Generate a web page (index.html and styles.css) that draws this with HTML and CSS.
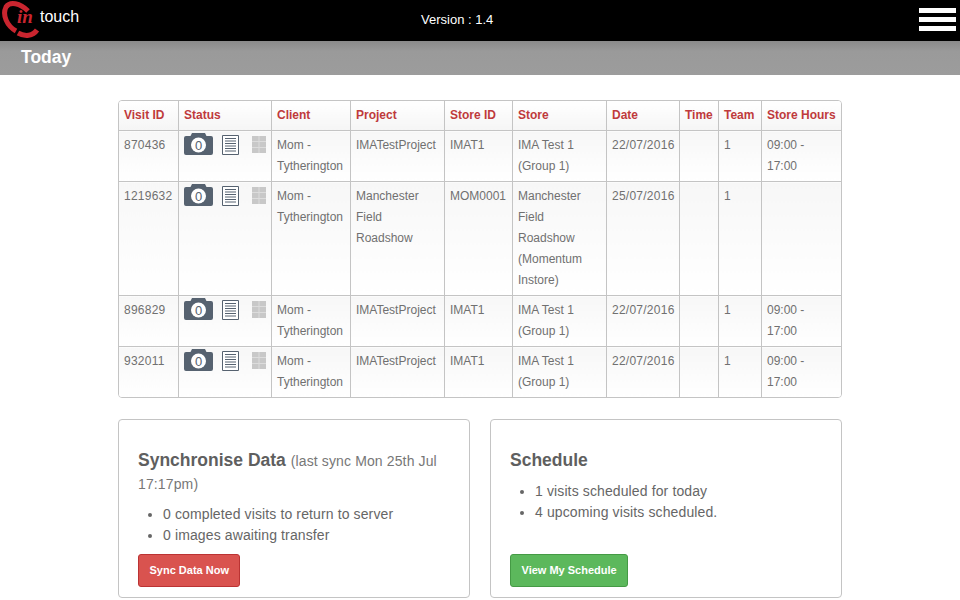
FILE: index.html
```html
<!DOCTYPE html>
<html>
<head>
<meta charset="utf-8">
<title>InTouch</title>
<link rel="stylesheet" href="styles.css">
</head>
<body>
  <svg class="icon-defs" width="0" height="0">
    <symbol id="icon-camera" viewBox="0 0 29 22">
      <path d="M0 5q0-2 2-2h4.500l1.500-3h13l1.500 3h4.500q2 0 2 2v15q0 2-2 2h-25q-2 0-2-2z" fill="#566270"/>
      <circle cx="14.500" cy="12" r="7.500" fill="#fff"/>
    </symbol>
    <symbol id="icon-list" viewBox="0 0 17 20">
      <path d="M.5.5h16v19H.5z" fill="#fff" stroke="#566270"/>
      <path d="M3 3.500h11M3 6h11M3 8.500h11M3 11h11M3 13.500h11M3 16h11" stroke="#566270"/>
    </symbol>
    <symbol id="icon-grid" viewBox="0 0 14 17">
      <path d="M0 0h14v17H0z" fill="#c8c8c8"/>
      <path d="M0 5.500h14M0 11.500h14M7 0v17" stroke="#dcdcdc"/>
    </symbol>
  </svg>

  <div class="topbar">
    <div class="logo">
      <svg width="42" height="40" viewBox="0 0 42 40">
        <path d="M16 31C7 26 2 15 6 7C10 1 20 3 28 11" fill="none" stroke="#c9252f" stroke-width="5"/>
        <path d="M18 33C25 37 33 36 37 30" fill="none" stroke="#c9252f" stroke-width="5"/>
        <text x="25" y="23" class="logo-in">in</text>
      </svg>
      <span class="logo-text">touch</span>
    </div>
    <div class="version">Version : 1.4</div>
    <div class="burger"><span></span><span></span><span></span></div>
  </div>
  <div class="titlebar">Today</div>

  <div class="content">
    <div class="table-wrap">
      <table class="visits">
        <colgroup>
          <col class="c1"><col class="c2"><col class="c3"><col class="c4"><col class="c5">
          <col class="c6"><col class="c7"><col class="c8"><col class="c9"><col class="c10">
        </colgroup>
        <thead>
          <tr>
            <th>Visit ID</th><th>Status</th><th>Client</th><th>Project</th><th>Store ID</th>
            <th>Store</th><th>Date</th><th>Time</th><th>Team</th><th>Store Hours</th>
          </tr>
        </thead>
        <tbody>
          <tr>
            <td class="num">870436</td>
            <td>
              <div class="status">
                <svg class="cam" width="29" height="22"><use href="#icon-camera"/><text x="14.500" y="16.500" class="cam-count">0</text></svg>
                <svg class="list" width="17" height="20"><use href="#icon-list"/></svg>
                <svg class="grid" width="14" height="17"><use href="#icon-grid"/></svg>
              </div>
            </td>
            <td>Mom - Tytherington</td><td>IMATestProject</td><td>IMAT1</td><td>IMA Test 1 (Group 1)</td>
            <td class="num">22/07/2016</td><td></td><td>1</td><td>09:00 - 17:00</td>
          </tr>
          <tr>
            <td class="num">1219632</td>
            <td>
              <div class="status">
                <svg class="cam" width="29" height="22"><use href="#icon-camera"/><text x="14.500" y="16.500" class="cam-count">0</text></svg>
                <svg class="list" width="17" height="20"><use href="#icon-list"/></svg>
                <svg class="grid" width="14" height="17"><use href="#icon-grid"/></svg>
              </div>
            </td>
            <td>Mom - Tytherington</td><td>Manchester Field Roadshow</td><td>MOM0001</td><td>Manchester Field Roadshow (Momentum Instore)</td>
            <td class="num">25/07/2016</td><td></td><td>1</td><td></td>
          </tr>
          <tr>
            <td class="num">896829</td>
            <td>
              <div class="status">
                <svg class="cam" width="29" height="22"><use href="#icon-camera"/><text x="14.500" y="16.500" class="cam-count">0</text></svg>
                <svg class="list" width="17" height="20"><use href="#icon-list"/></svg>
                <svg class="grid" width="14" height="17"><use href="#icon-grid"/></svg>
              </div>
            </td>
            <td>Mom - Tytherington</td><td>IMATestProject</td><td>IMAT1</td><td>IMA Test 1 (Group 1)</td>
            <td class="num">22/07/2016</td><td></td><td>1</td><td>09:00 - 17:00</td>
          </tr>
          <tr>
            <td class="num">932011</td>
            <td>
              <div class="status">
                <svg class="cam" width="29" height="22"><use href="#icon-camera"/><text x="14.500" y="16.500" class="cam-count">0</text></svg>
                <svg class="list" width="17" height="20"><use href="#icon-list"/></svg>
                <svg class="grid" width="14" height="17"><use href="#icon-grid"/></svg>
              </div>
            </td>
            <td>Mom - Tytherington</td><td>IMATestProject</td><td>IMAT1</td><td>IMA Test 1 (Group 1)</td>
            <td class="num">22/07/2016</td><td></td><td>1</td><td>09:00 - 17:00</td>
          </tr>
        </tbody>
      </table>
    </div>

    <div class="panels">
      <div class="panel">
        <h3>Synchronise Data <small>(last sync Mon 25th Jul 17:17pm)</small></h3>
        <ul>
          <li>0 completed visits to return to server</li>
          <li>0 images awaiting transfer</li>
        </ul>
        <a class="btn btn-red">Sync Data Now</a>
      </div>
      <div class="panel">
        <h3>Schedule</h3>
        <ul>
          <li>1 visits scheduled for today</li>
          <li>4 upcoming visits scheduled.</li>
        </ul>
        <a class="btn btn-green">View My Schedule</a>
      </div>
    </div>
  </div>
</body>
</html>
```

FILE: styles.css
```css
html, body {
  margin: 0;
  height: 100%;
  overflow: hidden;
}
body {
  background: #fff;
  color: #666;
  font-family: "Liberation Sans", Arial, sans-serif;
  font-size: 14px;
}
.icon-defs {
  display: block;
}
.topbar {
  height: 41px;
  background: #000;
  display: flex;
  align-items: flex-start;
  color: #fff;
}
.logo {
  width: 200px;
  display: flex;
  align-items: flex-start;
}
.logo-in {
  fill: #c9252f;
  font: italic bold 19px "Liberation Serif", serif;
  text-anchor: middle;
}
.logo-text {
  font-size: 16px;
  margin: 8px 0 0 -2px;
}
.version {
  font-size: 13px;
  padding-top: 12px;
  margin-left: 221px;
}
.burger {
  width: 37px;
  padding-top: 8px;
  margin-left: auto;
  margin-right: 4px;
  display: flex;
  flex-direction: column;
  gap: 4px;
}
.burger span {
  height: 5px;
  background: #fff;
}
.titlebar {
  height: 34px;
  line-height: 33px;
  padding-left: 21px;
  background: linear-gradient(#8a8a8a, #9a9a9a 30%, #9c9c9c);
  color: #fff;
  font-size: 17.5px;
  font-weight: bold;
}
.content {
  width: 724px;
  margin: 25px auto 0;
}
.table-wrap {
  border: 1px solid #c4c4c4;
  border-radius: 4px;
  overflow: hidden;
}
.visits {
  width: 100%;
  table-layout: fixed;
  border-collapse: collapse;
  font-size: 12px;
}
.c1 { width: 59px; }
.c2 { width: 93px; }
.c3 { width: 79px; }
.c4 { width: 94px; }
.c5 { width: 68px; }
.c6 { width: 94px; }
.c7 { width: 73px; }
.c8 { width: 39px; }
.c9 { width: 43px; }
.c10 { width: 80px; }
.visits th, .visits td {
  border: 1px solid #c4c4c4;
  padding: 4px 4.5px 4px 5.5px;
  line-height: 21px;
  text-align: left;
  vertical-align: top;
}
.visits tr > :first-child {
  border-left: 0;
  padding-left: 5px;
}
.visits tr > :last-child { border-right: 0; }
.visits thead th { border-top: 0; }
.visits tbody tr:last-child td { border-bottom: 0; }
.visits th {
  color: #bf3a3c;
  background: linear-gradient(#fff, #f5f5f5);
  white-space: nowrap;
}
.visits td {
  color: #707070;
  background: linear-gradient(#f7f7f7, #fff);
}
.visits td.num {
  letter-spacing: 0.25px;
}
.status {
  display: flex;
  align-items: flex-start;
  margin-top: -2px;
  height: 23px;
}
.list { margin: 2px 0 0 9px; }
.grid { margin: 3px 0 0 13px; }
.cam-count {
  fill: #566270;
  font: 13px "Liberation Sans", sans-serif;
  text-anchor: middle;
}
.panels {
  display: flex;
  gap: 20px;
  margin-top: 21px;
}
.panel {
  flex: 1;
  height: 179px;
  border: 1px solid #c4c4c4;
  border-radius: 4px;
  padding: 29px 19px 10px;
  box-sizing: border-box;
  display: flex;
  flex-direction: column;
}
.panel h3 {
  margin: 0;
  font-size: 17.5px;
  line-height: 23px;
  color: #5f5f5f;
}
.panel small {
  font-size: 14px;
  line-height: 1;
  font-weight: normal;
  color: #777;
  letter-spacing: 0.13px;
}
.panel ul {
  margin: 9px 0 0;
  padding-left: 25px;
  line-height: 21px;
  letter-spacing: 0.12px;
}
.btn {
  display: block;
  align-self: flex-start;
  margin-top: auto;
  padding: 0 10.5px;
  height: 33px;
  line-height: 31px;
  box-sizing: border-box;
  border-radius: 3px;
  color: #fff;
  font-size: 11px;
  font-weight: bold;
}
.btn-red {
  background: #d9534f;
  border: 1px solid #b33;
}
.btn-green {
  background: #5cb85c;
  border: 1px solid #459a45;
}
```
